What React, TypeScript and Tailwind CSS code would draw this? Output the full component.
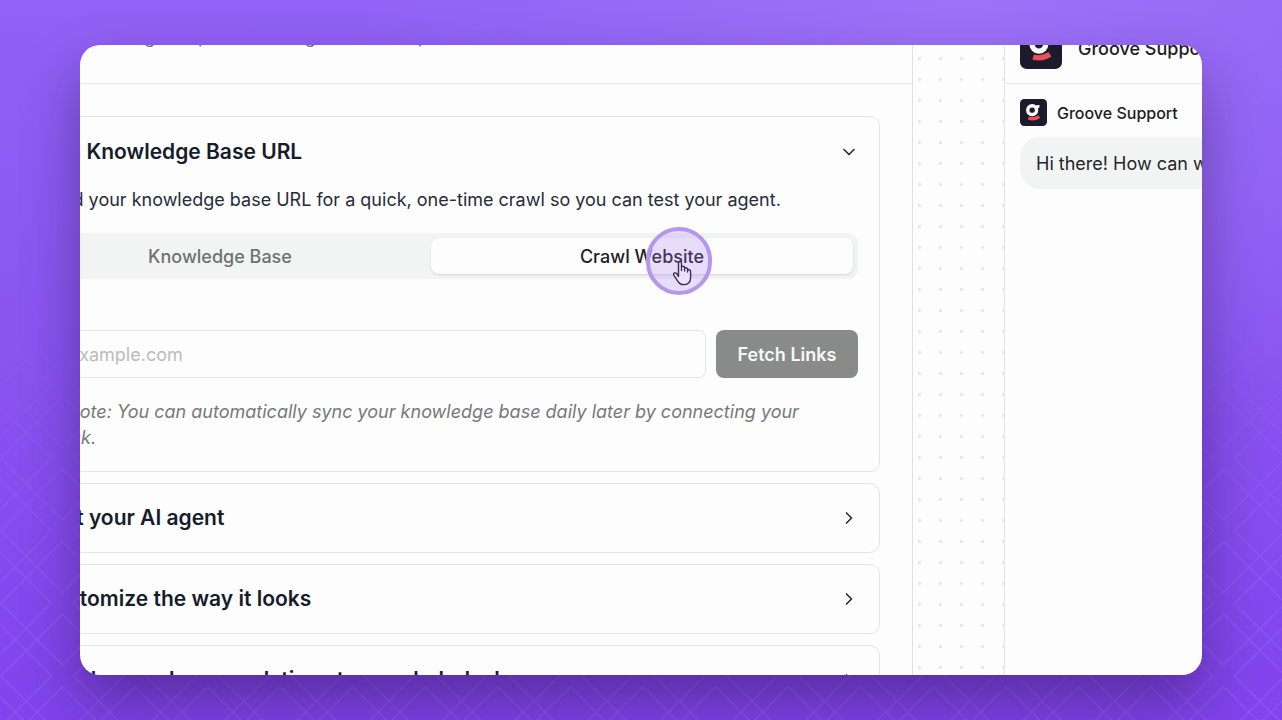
import { useState } from "react";
import type { ReactNode } from "react";
import { ChevronDown, ChevronRight, Globe, Bot, Palette, LifeBuoy } from "lucide-react";

function GrooveLogo({ className }: { className?: string }) {
  return (
    <svg viewBox="0 0 80 80" className={className} aria-hidden="true">
      <rect width="80" height="80" rx="13" fill="#1d1a2c" />
      <circle cx="36" cy="33" r="13" fill="none" stroke="#fff" strokeWidth="10" />
      <path d="M45 22 Q49 17 58 18 L57 26 Q52 27 50 32 Z" fill="#fff" />
      <path d="M25 57 Q42 62 57 52" fill="none" stroke="#e9505a" strokeWidth="10" />
    </svg>
  );
}

// Overlapping diamond outlines that fade in towards the bottom of the page
function DiamondPattern() {
  return (
    <svg className="absolute inset-0 w-full h-full" aria-hidden="true">
      <defs>
        <pattern id="diamonds" x="26.1" y="494.4" width="72.58" height="72.58" patternUnits="userSpaceOnUse">
          <g fill="none" stroke="#fff" strokeWidth="1.3">
            <path d="M36.29 -25.4 L97.98 36.29 L36.29 97.98 L-25.4 36.29 Z" />
            <path d="M108.87 -25.4 L47.18 36.29 L108.87 97.98" />
            <path d="M-36.29 -25.4 L25.4 36.29 L-36.29 97.98" />
            <path d="M-25.4 -36.29 L36.29 25.4 L97.98 -36.29" />
            <path d="M-25.4 108.87 L36.29 47.18 L97.98 108.87" />
          </g>
        </pattern>
        <linearGradient id="fade" x1="0" y1="0" x2="0" y2="1">
          <stop offset="0.4" stopColor="#fff" stopOpacity="0" />
          <stop offset="0.9" stopColor="#fff" stopOpacity="1" />
        </linearGradient>
        <mask id="fadeMask">
          <rect width="100%" height="100%" fill="url(#fade)" />
        </mask>
      </defs>
      <rect width="100%" height="100%" fill="url(#diamonds)" mask="url(#fadeMask)" opacity="0.09" />
    </svg>
  );
}

function ClickMarker() {
  return (
    <span className="absolute left-1/2 -top-[11px] ml-1 w-[66px] h-[68px] rounded-full border-4 border-[#b596ee] bg-[#a67cf5]/25 pointer-events-none">
      <svg viewBox="0 0 20 26" className="absolute left-[22px] top-[29px] w-5 h-[26px]" aria-hidden="true">
        <path
          d="M6.5 16.5 V3.2 Q6.5 1.3 8 1.3 Q9.5 1.3 9.5 3.2 V10.5 V7.6 Q9.5 6.3 11 6.3 Q12.6 6.3 12.6 7.8 V11 V8.8 Q12.8 7.6 14 7.7 Q15.6 7.8 15.6 9.3 V12 V10.4 Q16 9.4 17 9.6 Q18.6 9.9 18.6 11.4 V17.5 Q18.6 24.6 12 24.6 Q7.6 24.6 5.6 20.8 L1.6 14.8 Q1.2 13.4 2.6 12.9 Q4 12.6 5 14 Z"
          fill="#efe6ff"
          fillOpacity="0.7"
          stroke="#382d52"
          strokeWidth="1.4"
          strokeLinejoin="round"
        />
      </svg>
    </span>
  );
}

interface SectionProps {
  title: string;
  icon: ReactNode;
  open: boolean;
  onToggle: () => void;
  children?: ReactNode;
}

function Section({ title, icon, open, onToggle, children }: SectionProps) {
  const Chevron = open ? ChevronDown : ChevronRight;
  return (
    <section className="border border-[#e3e5e5] rounded-[10px] pl-[21px] pr-5">
      <button
        onClick={onToggle}
        aria-expanded={open}
        className={`w-full flex items-center gap-[14px] text-left cursor-pointer ${open ? "h-[70px]" : "h-[68px]"}`}
      >
        {icon}
        <span className="flex-1 text-[21px] font-semibold text-[#171c2b]">{title}</span>
        <Chevron size={20} strokeWidth={2} className="text-[#2a2d33]" />
      </button>
      {open && children}
    </section>
  );
}

function KnowledgeForm() {
  return (
    <div className="pb-5 pr-px">
      <p className="text-[18px] leading-[26px] text-[#262c3a]">
        First, add your knowledge base URL for a quick, one-time crawl so you can test your agent.
      </p>
      <div role="tablist" className="mt-5 grid grid-cols-2 p-[5px] h-[46px] rounded-[10px] bg-[#f2f4f4] text-[18px] font-medium">
        <button role="tab" aria-selected="false" className="text-[#6e7271]">
          Knowledge Base
        </button>
        <button role="tab" aria-selected="true" className="relative rounded-[8px] bg-[#fdfdfd] text-[#1f2026] shadow-sm">
          Crawl Website
          <ClickMarker />
        </button>
      </div>
      <label htmlFor="site" className="block pt-[17px] h-[51px] text-[18px] leading-[26px] font-medium text-[#262c3a]">
        URL
      </label>
      <div className="flex gap-[10px]">
        <input
          id="site"
          placeholder="www.example.com"
          className="flex-1 min-w-0 h-12 px-4 rounded-[8px] border border-[#e3e5e5] text-[18px] placeholder:text-[#b9bbbd]"
        />
        <button className="w-[142px] h-12 rounded-[8px] bg-[#898b8a] text-[18px] font-semibold text-[#f8f8f8]">
          Fetch Links
        </button>
      </div>
      <p className="mt-[21px] text-[18px] leading-[26px] italic text-[#767979]">
        Please Note: You can automatically sync your knowledge base daily later by connecting your Help{"\u00A0"}Desk.
      </p>
    </div>
  );
}

function SetupColumn() {
  const [open, setOpen] = useState(0);
  const iconClass = "w-[22px] h-[22px] shrink-0 text-[#171c2b]";
  const sections = [
    { title: "Add Knowledge Base URL", icon: <Globe className={iconClass} />, body: <KnowledgeForm /> },
    { title: "Test your AI agent", icon: <Bot className={iconClass} /> },
    { title: "Customize the way it looks", icon: <Palette className={iconClass} /> },
    { title: "Enable seamless escalations to your helpdesk", icon: <LifeBuoy className={iconClass} /> },
  ];
  return (
    <main className="flex-1 min-w-0 -ml-[130px] border-r border-[#e0e2e2]">
      <header className="h-[103px] pl-21 pb-[33px] flex items-end border-b border-[#e8eaea]">
        <p className="text-[18px] leading-[26px] text-[#6b6f86]">
          Get your AI agent up and running in a few steps
        </p>
      </header>
      <div className="p-8 flex flex-col gap-[11px]">
        {sections.map((s, i) => (
          <Section
            key={s.title}
            title={s.title}
            icon={s.icon}
            open={open === i}
            onToggle={() => setOpen(open === i ? -1 : i)}
          >
            {s.body}
          </Section>
        ))}
      </div>
    </main>
  );
}

function ChatPreview() {
  return (
    <aside className="w-[360px] shrink-0 -mr-[162px] border-l border-[#e3e5e5]">
      <header className="h-[103px] px-[15px] pb-[14px] flex items-end border-b border-[#e8eaea]">
        <div className="flex items-center gap-4">
          <GrooveLogo className="w-[42px] h-[42px]" />
          <h2 className="text-[18px] font-medium text-[#1c1d22]">Groove Support</h2>
        </div>
      </header>
      <div className="px-[15px] pt-[15px]">
        <div className="flex items-center gap-[10px]">
          <GrooveLogo className="w-[27px] h-[27px]" />
          <span className="text-[16px] leading-[26px] font-medium text-[#1c1d22]">Groove Support</span>
        </div>
        <p className="mt-[11px] px-4 pt-[14px] pb-3 rounded-[20px] bg-[#f2f4f4] text-[18px] leading-[26px] text-[#24262a] whitespace-nowrap">
          Hi there! How can we help you?
        </p>
      </div>
    </aside>
  );
}

export default function App() {
  return (
    <div
      className="relative h-screen px-20 py-[45px] flex overflow-hidden bg-[radial-gradient(ellipse_at_75%_0%,#9d72f8_0%,transparent_45%),linear-gradient(to_bottom,#9162f5_0%,#8a55f1_45%,#8143ec_100%)]"
      style={{ fontFamily: 'Inter, "Liberation Sans", sans-serif' }}
    >
      <DiamondPattern />
      <div className="relative flex-1 min-w-0 flex overflow-hidden rounded-[20px] bg-[#fdfdfd] shadow-[0_28px_56px_rgba(30,15,60,0.42)]">
        <div className="flex-1 min-w-0 flex -mt-16">
          <SetupColumn />
          <div className="w-[91px] shrink-0 bg-[radial-gradient(circle,#e4e6e6_1px,transparent_2px)] bg-[size:21px_21px] bg-[position:-4px_4px]" />
          <ChatPreview />
        </div>
      </div>
    </div>
  );
}
